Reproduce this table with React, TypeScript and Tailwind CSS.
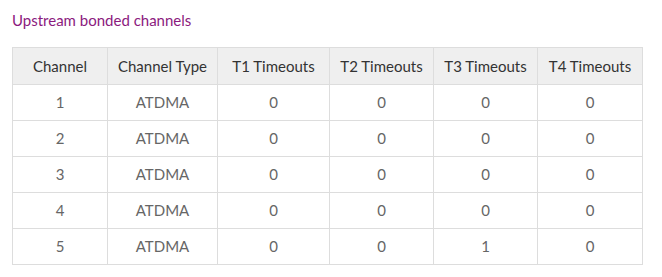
const rows = [
  { ch: 1, type: 'ATDMA', t: [0, 0, 0, 0] },
  { ch: 2, type: 'ATDMA', t: [0, 0, 0, 0] },
  { ch: 3, type: 'ATDMA', t: [0, 0, 0, 0] },
  { ch: 4, type: 'ATDMA', t: [0, 0, 0, 0] },
  { ch: 5, type: 'ATDMA', t: [0, 0, 1, 0] },
]

const headers = ['Channel', 'Channel Type', 'T1 Timeouts', 'T2 Timeouts', 'T3 Timeouts', 'T4 Timeouts']

export default function App() {
  return (
    <div className="w-[662px] h-[277px] bg-white px-3 pt-[10px] font-['Lato','Open_Sans',sans-serif]">
      <h2 className="text-[15px] leading-[20px] text-[#8b1a7e] font-normal">Upstream bonded channels</h2>
      <table className="mt-[17px] w-[631px] table-fixed border-collapse text-[15px]">
        <colgroup>
          <col className="w-[95px]" />
          <col className="w-[110px]" />
          <col className="w-[112px]" />
          <col className="w-[104px]" />
          <col className="w-[104px]" />
          <col className="w-[105px]" />
        </colgroup>
        <thead>
          <tr className="h-[37px] bg-[#efefef]">
            {headers.map(h => (
              <th key={h} className="border border-[#dddddd] font-normal text-[#333333] text-center p-0">{h}</th>
            ))}
          </tr>
        </thead>
        <tbody>
          {rows.map(r => (
            <tr key={r.ch} className="h-[36px]">
              <td className="border border-[#dddddd] text-center text-[#666666] p-0">{r.ch}</td>
              <td className="border border-[#dddddd] text-center text-[#666666] p-0">{r.type}</td>
              {r.t.map((v, i) => (
                <td key={i} className="border border-[#dddddd] text-center text-[#666666] p-0">{v}</td>
              ))}
            </tr>
          ))}
        </tbody>
      </table>
    </div>
  )
}
